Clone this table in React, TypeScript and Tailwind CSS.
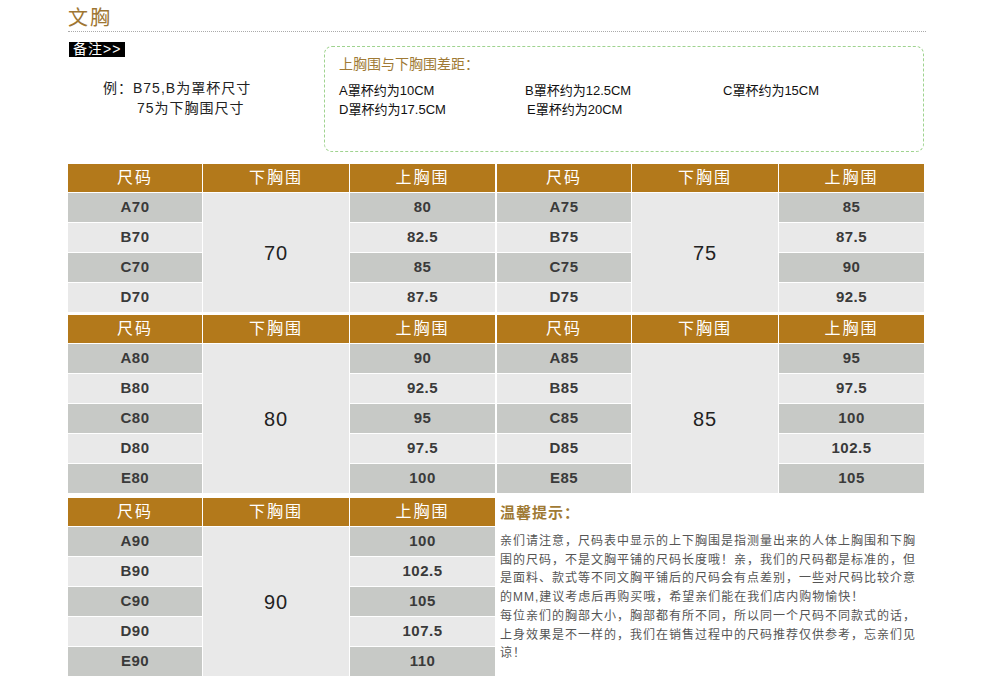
import React from 'react'

type Row = { size: string; top: string }
type Table = { under: string; rows: Row[] }

const font = { fontFamily: '"Liberation Sans", "Noto Sans CJK SC", sans-serif' }

const tables: Table[] = [
  { under: '70', rows: [{ size: 'A70', top: '80' }, { size: 'B70', top: '82.5' }, { size: 'C70', top: '85' }, { size: 'D70', top: '87.5' }] },
  { under: '75', rows: [{ size: 'A75', top: '85' }, { size: 'B75', top: '87.5' }, { size: 'C75', top: '90' }, { size: 'D75', top: '92.5' }] },
  { under: '80', rows: [{ size: 'A80', top: '90' }, { size: 'B80', top: '92.5' }, { size: 'C80', top: '95' }, { size: 'D80', top: '97.5' }, { size: 'E80', top: '100' }] },
  { under: '85', rows: [{ size: 'A85', top: '95' }, { size: 'B85', top: '97.5' }, { size: 'C85', top: '100' }, { size: 'D85', top: '102.5' }, { size: 'E85', top: '105' }] },
  { under: '90', rows: [{ size: 'A90', top: '100' }, { size: 'B90', top: '102.5' }, { size: 'C90', top: '105' }, { size: 'D90', top: '107.5' }, { size: 'E90', top: '110' }] },
]

const SizeTable = ({ t }: { t: Table }) => {
  const span = t.rows.length === 4 ? 'row-span-4' : 'row-span-5'
  return (
    <div className="grid grid-cols-[134px_146px_145px] gap-px bg-white w-[427px]">
      {['尺码', '下胸围', '上胸围'].map((h) => (
        <div key={h} className="h-[28px] bg-[#b3791b] text-white text-[16px] tracking-[2px] flex items-center justify-center">
          {h}
        </div>
      ))}
      {t.rows.map((r, i) => {
        const bg = i % 2 === 0 ? 'bg-[#c7c9c6]' : 'bg-[#e9e9e9]'
        return (
          <React.Fragment key={r.size}>
            <div className={`h-[29px] ${bg} text-[15px] font-bold tracking-[0.5px] text-[#3a3a3a] flex items-center justify-center`}>
              {r.size}
            </div>
            {i === 0 && (
              <div className={`${span} bg-[#e9e9e9] text-[20px] tracking-[1px] text-[#222] flex items-center justify-center`}>
                {t.under}
              </div>
            )}
            <div className={`h-[29px] ${bg} text-[15px] font-bold tracking-[0.5px] text-[#3a3a3a] flex items-center justify-center`}>
              {r.top}
            </div>
          </React.Fragment>
        )
      })}
    </div>
  )
}

const tips = [
  '亲们请注意，尺码表中显示的上下胸围是指测量出来的人体上胸围和下胸',
  '围的尺码，不是文胸平铺的尺码长度哦！亲，我们的尺码都是标准的，但',
  '是面料、款式等不同文胸平铺后的尺码会有点差别，一些对尺码比较介意',
  '的MM,建议考虑后再购买哦，希望亲们能在我们店内购物愉快！',
  '每位亲们的胸部大小，胸部都有所不同，所以同一个尺码不同款式的话，',
  '上身效果是不一样的，我们在销售过程中的尺码推荐仅供参考，忘亲们见',
  '谅！',
]

export default function App() {
  return (
    <div className="w-[1000px] h-[700px] bg-white pl-[68px] overflow-hidden" style={font}>
      <div className="pt-[7px] text-[20px] leading-[22px] tracking-[2px] text-[#9e7632]">文胸</div>
      <div className="mt-[2px] w-[858px] border-t border-dotted border-[#aaa]" />

      <div className="flex w-[856px]">
        <div className="w-[255px] pt-[10px]">
          <div className="ml-px w-fit bg-black text-white text-[14px] leading-[15px] px-[4px] tracking-[1px]">备注&gt;&gt;</div>
          <div className="mt-[21px] pl-[35px] text-[14px] leading-[20px] tracking-[1px] text-[#222]">
            <div>例：B75,B为罩杯尺寸</div>
            <div className="pl-[34px]">75为下胸围尺寸</div>
          </div>
        </div>
        <div className="ml-auto mt-[14px] w-[600px] h-[106px] border border-dashed border-[#9fd38f] rounded-[8px] pl-[14px] pt-[8px]">
          <div className="text-[14px] leading-[18px] text-[#a07a35]">上胸围与下胸围差距：</div>
          <div className="mt-[8px] grid grid-cols-[186px_198px_1fr] text-[13px] leading-[19px] text-[#111]">
            <div>A罩杯约为10CM</div>
            <div>B罩杯约为12.5CM</div>
            <div>C罩杯约为15CM</div>
            <div>D罩杯约为17.5CM</div>
            <div className="pl-[2px]">E罩杯约为20CM</div>
          </div>
        </div>
      </div>

      <div className="mt-[12px] flex flex-col gap-[3px] w-[857px]">
        <div className="flex gap-[2px]">
          <SizeTable t={tables[0]} />
          <SizeTable t={tables[1]} />
        </div>
        <div className="flex gap-[2px]">
          <SizeTable t={tables[2]} />
          <SizeTable t={tables[3]} />
        </div>
        <div className="flex gap-[2px] mt-[2px]">
          <SizeTable t={tables[4]} />
          <div className="pl-[3px] pt-[5px]">
            <div className="text-[15px] leading-[20px] tracking-[1px] text-[#a07a35] font-bold">温馨提示：</div>
            <div className="mt-[9px] text-[12px] leading-[18.7px] tracking-[1px] text-[#555]">
              {tips.map((l) => (
                <div key={l} className="whitespace-nowrap">{l}</div>
              ))}
            </div>
          </div>
        </div>
      </div>
    </div>
  )
}
